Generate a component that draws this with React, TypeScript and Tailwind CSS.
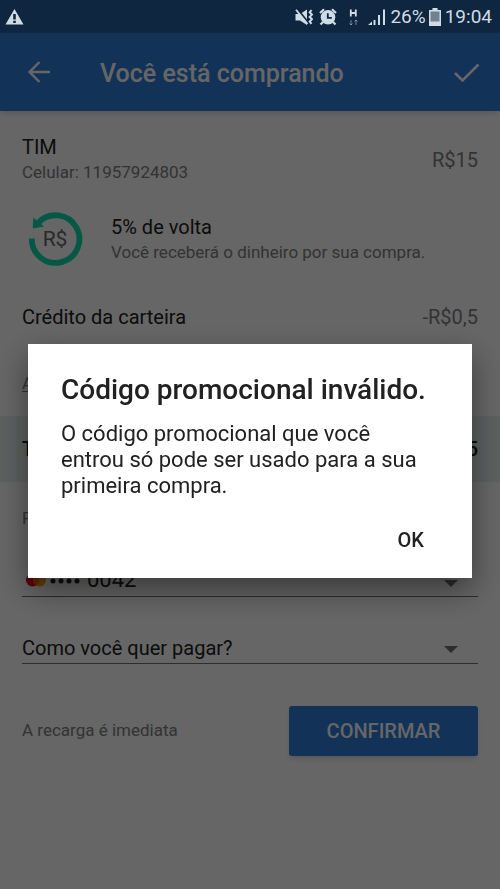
import { useState } from "react";

const StatusBar = () => (
    <div className="relative z-20 flex h-[33px] items-center justify-between bg-[#0e2640] pl-[5px] pr-2 text-[#d0dce5]">
        <svg className="h-[18px] w-[19px]" viewBox="0 0 19 18" fill="currentColor" aria-label="Alerta">
            <path fillRule="evenodd" d="M9.5 1 18.5 16.5H.5zM8.2 6v5.5h2.6V6zM8.2 12.7v2.2h2.6v-2.2z" />
        </svg>
        <div className="flex items-center">
            <svg className="h-[18px] w-[18px]" viewBox="0 0 18 18" fill="currentColor" aria-label="Vibrar">
                <path d="M.5 6h4.500L12 1.500v15.500L5 12.500H.5z" />
                <path d="M2.500 1 14 15.500" stroke="#0e2640" strokeWidth="2" />
                <path d="M1 1.800 12.500 16" stroke="currentColor" strokeWidth="1.800" />
                <path d="m16.500 2-1.800 2.300 2.300 2.300-2.300 2.300 2.300 2.300-2.300 2.300 1.800 2.300" fill="none" stroke="currentColor" strokeWidth="2" />
            </svg>
            <svg className="ml-1.5 h-[18px] w-[18px]" viewBox="0 0 18 18" fill="currentColor" aria-label="Alarme">
                <path d="M1 5 5 1.200M17 5l-4-3.800M4 14l-2.500 2.500M14 14l2.500 2.500" fill="none" stroke="currentColor" strokeWidth="2.200" />
                <circle cx="9" cy="9.300" r="7.300" />
                <path d="M8.800 5.200v4.600h4" fill="none" stroke="#0e2640" strokeWidth="1.800" />
            </svg>
            <svg className="ml-3 h-[18px] w-[9px]" viewBox="0 0 9 18" fill="none" stroke="currentColor" aria-label="Dados móveis">
                <path d="M1.800 1.500v7M6.800 1.500v7M2 5h5" strokeWidth="1.800" />
                <path d="M2 12v5M.5 15.500 2 17l1.500-1.500M7 17v-5M5.500 13.500 7 12l1.500 1.500" strokeWidth="1" opacity=".5" />
            </svg>
            <svg className="ml-2.5 h-[18px] w-[18px]" viewBox="0 0 18 18" fill="currentColor" aria-label="Sinal">
                <path d="M0 17 4 13.500V17zM5.500 12h2v5h-2zM10 7h2v10h-2zM15 1.500h2V17h-2z" />
            </svg>
            <span className="ml-1 text-[19px] leading-6">26%</span>
            <svg className="ml-[3px] h-[18px] w-3" viewBox="0 0 12 18" fill="currentColor" aria-label="Bateria">
                <path opacity=".5" d="M3.500 1h5v1.500H11V14H1V2.500h2.500z" />
                <path d="M3.500 0h5v2H12v16H0V2h3.500zM1.500 3.500v10h9v-10z" fillRule="evenodd" />
            </svg>
            <span className="ml-1 text-[19px] leading-6">19:04</span>
        </div>
    </div>
);

const CashbackIcon = () => (
    <svg className="h-[56px] w-[56px]" viewBox="0 0 56 56" aria-hidden="true">
        <path d="M4.800 27.500A23.800 23.800 0 1 0 11.500 11.500" fill="none" stroke="#0ddcac" strokeWidth="5.800" />
        <path d="M6.200 6.500 17 15.500 5.800 17.500z" fill="#0ddcac" />
        <text x="28" y="35" textAnchor="middle" fontSize="21" fill="#6a6a6a">R$</text>
    </svg>
);

const Caret = () => (
    <svg className="pointer-events-none absolute right-5 top-1/2 h-[7px] w-[14px]" viewBox="0 0 14 7" fill="#707070">
        <path d="M0 0h14L7 7z" />
    </svg>
);

export default function App() {
    const [showDialog, setShowDialog] = useState(true);

    return (
        <div className="min-h-screen bg-white font-['Roboto',sans-serif] text-[#212121]">
            <StatusBar />
            <header className="flex h-[78px] items-center bg-[#2d7dda] px-5 text-white shadow-md">
                <button type="button" aria-label="Voltar" className="flex w-20 items-center">
                    <svg className="h-10 w-10" viewBox="0 0 40 40" fill="none" stroke="currentColor" strokeWidth="2.400">
                        <path d="M30 20H9.500M19.500 10l-10 10 10 10" />
                    </svg>
                </button>
                <h1 className="flex-1 pt-1 text-[25px] font-medium">Você está comprando</h1>
                <button type="button" aria-label="Concluir">
                    <svg className="h-7 w-7" viewBox="0 0 28 28" fill="none" stroke="currentColor" strokeWidth="2.600">
                        <path d="m3 15 7.500 7.500L26.500 6.500" />
                    </svg>
                </button>
            </header>

            <main className="pt-6">
                <div className="flex items-center justify-between px-[22px]">
                    <div>
                        <div className="text-[20px] leading-6">TIM</div>
                        <div className="pt-px text-[17px] leading-6 text-[#808080]">Celular: 11957924803</div>
                    </div>
                    <div className="text-[20px] leading-6 text-[#808080]">R$15</div>
                </div>

                <div className="mt-[27px] flex items-center px-[27px]">
                    <CashbackIcon />
                    <div className="ml-7">
                        <div className="text-[20px] leading-6">5% de volta</div>
                        <div className="pt-px text-[17px] leading-6 text-[#808080]">Você receberá o dinheiro por sua compra.</div>
                    </div>
                </div>

                <div className="mt-[38px] flex justify-between px-[22px] text-[20px] leading-6">
                    <span>Crédito da carteira</span>
                    <span className="text-[#808080]">-R$0,5</span>
                </div>

                <div className="mt-[42px] px-[22px] text-[17px] leading-6">
                    <a href="#promo" className="text-[#808080] underline underline-offset-2">Adicionar código promocional</a>
                </div>

                <div className="mt-[21px] flex h-[66px] items-center justify-between bg-[#e6f2f0] px-[22px] text-[20px] font-medium">
                    <span>Total</span>
                    <span>R$14,5</span>
                </div>

                <div className="px-[22px] pt-6">
                    <label htmlFor="card" className="block text-[17px] leading-6 text-[#808080]">Forma de pagamento</label>
                    <div className="relative mt-[33px] flex h-[34px] items-center border-b border-[#707070]">
                        <svg className="ml-1 h-[14px] w-[54px]" viewBox="0 0 54 14">
                            <circle cx="6.500" cy="7" r="6.500" fill="#eb001b" />
                            <circle cx="13.500" cy="7" r="6.500" fill="#f79e1b" />
                            <path d="M10 1.500a6.500 6.500 0 0 1 0 11 6.500 6.500 0 0 1 0-11z" fill="#ff5f00" />
                            <g fill="#212121">
                                <circle cx="27" cy="8" r="2.500" />
                                <circle cx="35" cy="8" r="2.500" />
                                <circle cx="43" cy="8" r="2.500" />
                                <circle cx="51" cy="8" r="2.500" />
                            </g>
                        </svg>
                        <select id="card" className="h-full flex-1 appearance-none bg-transparent pl-[7px] text-[22px]">
                            <option>0042</option>
                        </select>
                        <Caret />
                    </div>
                    <div className="relative mt-8 h-[35px] border-b border-[#707070]">
                        <select aria-label="Como você quer pagar?" className="h-full w-full appearance-none bg-transparent pt-1 text-[20px]">
                            <option>Como você quer pagar?</option>
                        </select>
                        <Caret />
                    </div>
                </div>

                <div className="mt-[42px] flex items-center justify-between px-[22px]">
                    <span className="text-[17px] text-[#808080]">A recarga é imediata</span>
                    <button type="button" className="h-[50px] w-[189px] rounded-[3px] bg-[#2d7dda] text-[20px] font-medium text-white shadow-md">
                        CONFIRMAR
                    </button>
                </div>
            </main>

            {showDialog && (
                <div className="fixed inset-0 z-10 flex items-center justify-center bg-black/60 px-7 pt-[33px]">
                    <div role="alertdialog" aria-labelledby="dialog-title" className="w-full bg-white px-[33px] pb-5 pt-[30px] shadow-[0_12px_30px_rgba(0,0,0,0.45)]">
                        <h2 id="dialog-title" className="text-[28px] font-medium leading-8">Código promocional inválido.</h2>
                        <p className="mt-[15px] pr-4 text-[22px] leading-[26px]">
                            O código promocional que você entrou só pode ser usado para a sua primeira compra.
                        </p>
                        <div className="mt-[23px] flex justify-end">
                            <button type="button" onClick={() => setShowDialog(false)} className="h-9 px-[15px] text-[20px] font-medium">
                                OK
                            </button>
                        </div>
                    </div>
                </div>
            )}
        </div>
    );
}
